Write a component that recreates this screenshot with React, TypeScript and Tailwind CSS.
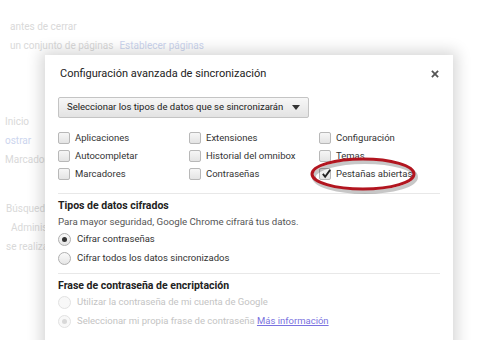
import React from "react";

const font = { fontFamily: 'Roboto, "Open Sans", sans-serif' };

function Box({ checked }: { checked?: boolean }) {
  return (
    <span className="relative inline-block w-[12px] h-[12px] rounded-[2px] border border-[#b8b8b8] bg-gradient-to-b from-[#f6f6f6] to-[#e4e4e4] shrink-0">
      {checked && (
        <svg className="absolute left-[1px] top-[-1px]" width="11" height="11" viewBox="0 0 12 12">
          <path d="M2 6.5 L4.5 9.5 L10 2" fill="none" stroke="#222" strokeWidth="2" />
        </svg>
      )}
    </span>
  );
}

function Radio({ checked, disabled }: { checked?: boolean; disabled?: boolean }) {
  return (
    <span
      className={
        "relative inline-flex items-center justify-center w-[13px] h-[13px] rounded-full border shrink-0 " +
        (disabled ? "border-[#e2e2e2] bg-[#f8f8f8]" : "border-[#b0b0b0] bg-gradient-to-b from-[#fafafa] to-[#e6e6e6]")
      }
    >
      {checked && <span className={"w-[5px] h-[5px] rounded-full " + (disabled ? "bg-[#d8d8d8]" : "bg-[#333]")} />}
    </span>
  );
}

function Check({ label, checked }: { label: string; checked?: boolean }) {
  return (
    <div className="flex items-center gap-[5px] h-[18px] whitespace-nowrap">
      <Box checked={checked} />
      <span>{label}</span>
    </div>
  );
}

export default function App() {
  return (
    <div className="relative w-[500px] h-[340px] overflow-hidden bg-white text-[9.5px]" style={font}>
      {/* background page */}
      <div className="text-[#d9d9d9] text-[10px] leading-none whitespace-nowrap">
        <div className="pt-[22px] pl-[10px]">antes de cerrar</div>
        <div className="pt-[9px] pl-[10px] flex gap-[6px]">
          <span>un conjunto de páginas</span>
          <span className="text-[#ccd5ee]">Establecer páginas</span>
        </div>
        <div className="pt-[66px] pl-[5px] flex flex-col gap-[9px]">
          <span>Inicio</span>
          <span className="text-[#ccd5ee]">ostrar</span>
          <span>Marcadores</span>
        </div>
        <div className="pt-[39px] pl-[6px] flex flex-col gap-[9px]">
          <span>Búsqueda</span>
          <span className="pl-[5px]">Administrar</span>
          <span>se realiza</span>
        </div>
      </div>

      {/* dialog */}
      <div className="absolute left-[45px] top-[55px] w-[408px] h-[300px] bg-white shadow-[0_0_14px_4px_rgba(0,0,0,0.16)] text-[#333]">
        <div className="flex items-center justify-between pl-[15px] pr-[14px] pt-[10px] h-[28px]">
          <span className="text-[11px] text-[#222]">Configuración avanzada de sincronización</span>
          <svg width="8" height="8" viewBox="0 0 9 9">
            <path d="M1 1 L8 8 M8 1 L1 8" stroke="#555" strokeWidth="2" />
          </svg>
        </div>
        <div className="px-[13px] pt-[14px]">
          <div className="inline-flex items-center gap-[9px] h-[21px] pl-[8px] pr-[8px] border border-[#c4c4c4] rounded-[2px] bg-gradient-to-b from-[#f7f7f7] to-[#e3e3e3] text-[#222] text-[9.5px]">
            <span>Seleccionar los tipos de datos que se sincronizarán</span>
            <svg width="8" height="5" viewBox="0 0 8 5">
              <path d="M0 0 L8 0 L4 5 Z" fill="#333" />
            </svg>
          </div>
          <div className="relative grid grid-cols-[131px_130px_1fr] mt-[11px] text-[#333]">
            <div className="flex flex-col">
              <Check label="Aplicaciones" />
              <Check label="Autocompletar" />
              <Check label="Marcadores" />
            </div>
            <div className="flex flex-col">
              <Check label="Extensiones" />
              <Check label="Historial del omnibox" />
              <Check label="Contraseñas" />
            </div>
            <div className="flex flex-col">
              <Check label="Configuración" />
              <Check label="Temas" />
              <Check label="Pestañas abiertas" checked />
            </div>
            <svg className="absolute left-[252px] top-[27px]" width="110" height="40" viewBox="0 0 110 40" style={{ overflow: "visible" }}>
              <ellipse cx="53" cy="19" rx="51" ry="15" fill="none" stroke="rgba(0,0,0,0.22)" strokeWidth="4" transform="translate(2 2)" />
              <ellipse cx="53" cy="18" rx="51" ry="15" fill="none" stroke="#b2151f" strokeWidth="3" />
            </svg>
          </div>
          <div className="h-px bg-[#e8e8e8] mt-[10px]" />
          <div className="font-bold text-[#222] text-[10.5px] mt-[5px] leading-[14px]">Tipos de datos cifrados</div>
          <div className="text-[#555] text-[9.7px] mt-[2px] leading-[14px]">Para mayor seguridad, Google Chrome cifrará tus datos.</div>
          <div className="flex flex-col mt-[1px]">
            <div className="flex items-center gap-[6px] h-[19px]"><Radio checked /><span>Cifrar contraseñas</span></div>
            <div className="flex items-center gap-[6px] h-[19px]"><Radio /><span>Cifrar todos los datos sincronizados</span></div>
          </div>
          <div className="h-px bg-[#e8e8e8] mt-[5px]" />
          <div className="font-bold text-[#222] text-[10.5px] mt-[5px] leading-[14px]">Frase de contraseña de encriptación</div>
          <div className="flex flex-col mt-[0px] text-[#c4c4c4]">
            <div className="flex items-center gap-[6px] h-[19px]"><Radio disabled /><span>Utilizar la contraseña de mi cuenta de Google</span></div>
            <div className="flex items-center gap-[6px] h-[19px]"><Radio disabled checked /><span>Seleccionar mi propia frase de contraseña <span className="text-[#7a72e0] underline">Más información</span></span></div>
          </div>
        </div>
      </div>
    </div>
  );
}
